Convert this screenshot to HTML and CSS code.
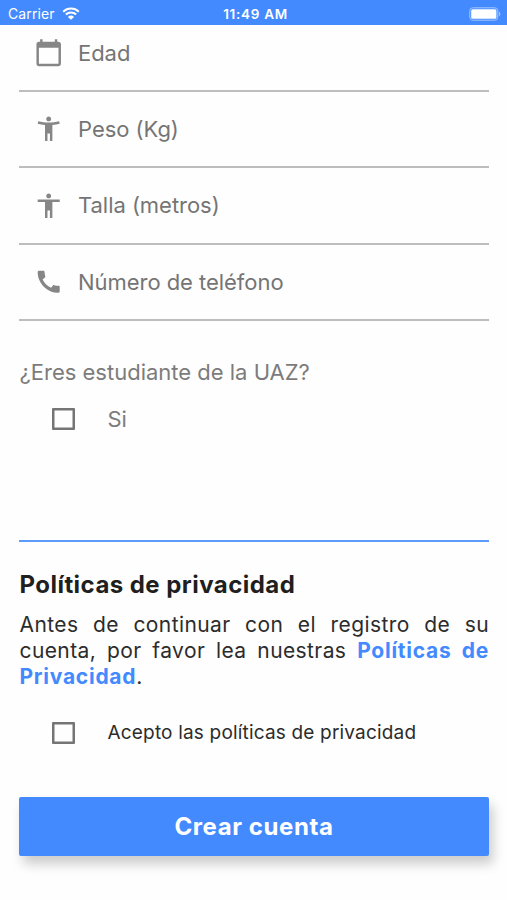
FILE: index.html
```html
<!DOCTYPE html>
<html lang="es">
<head>
  <meta charset="UTF-8" />
  <meta name="viewport" content="width=device-width, initial-scale=1.0" />
  <title>Registro</title>
  <link rel="stylesheet" href="styles.css">
</head>
<body>

  <!-- Barra de estado -->
  <header class="status-bar">
    <div class="status-left">
      <span class="carrier">Carrier</span>
      <svg class="wifi" viewBox="0 0 18 13" aria-hidden="true">
        <path d="M1.2 4.7a11.2 11.2 0 0 1 15.6 0M3.9 7.6a7.3 7.3 0 0 1 10.2 0" />
        <path class="wifi-dot" d="M9 12.8L5.9 9.9a4.4 4.4 0 0 1 6.2 0z" />
      </svg>
    </div>
    <span class="clock">11:49 AM</span>
    <div class="status-right">
      <svg class="battery" viewBox="0 0 32 14" aria-hidden="true">
        <rect class="battery-frame" x="0.8" y="0.8" width="28" height="12.4" rx="3" />
        <rect x="2.2" y="2.2" width="25.2" height="9.6" rx="1.6" />
        <path class="battery-tip" d="M30 4.8c1.8.6 1.8 3.8 0 4.4z" />
      </svg>
    </div>
  </header>

  <main class="form">
    <!-- Campos -->
    <div class="fields">
      <div class="field">
        <svg class="icon" viewBox="0 0 24 24"><path d="M20 3h-1V1h-2v2H7V1H5v2H4c-1.1 0-2 .9-2 2v16c0 1.1.9 2 2 2h16c1.1 0 2-.9 2-2V5c0-1.1-.9-2-2-2zm0 18H4V8h16v13z"/></svg>
        <span>Edad</span>
      </div>
      <div class="field">
        <svg class="icon" viewBox="0 0 24 24"><path d="M20.5 6c-2.61.7-5.67 1-8.5 1s-5.89-.3-8.5-1L3 8c1.86.5 4 .83 6 1v13h2v-6h2v6h2V9c2-.17 4.14-.5 6-1l-.5-2zM12 6c1.1 0 2-.9 2-2s-.9-2-2-2-2 .9-2 2 .9 2 2 2z"/></svg>
        <span>Peso (Kg)</span>
      </div>
      <div class="field">
        <svg class="icon" viewBox="0 0 24 24"><path d="M12 2c1.1 0 2 .9 2 2s-.9 2-2 2-2-.9-2-2 .9-2 2-2zm9 7h-6v13h-2v-6h-2v6H9V9H3V7h18v2z"/></svg>
        <span>Talla (metros)</span>
      </div>
      <div class="field">
        <svg class="icon" viewBox="0 0 24 24"><path d="M20.01 15.38c-1.23 0-2.42-.2-3.53-.56-.35-.12-.74-.03-1.01.24l-1.57 1.97c-2.83-1.35-5.48-3.9-6.89-6.83l1.95-1.66c.27-.28.35-.67.24-1.02-.37-1.11-.56-2.3-.56-3.53 0-.54-.45-.99-.99-.99H4.19C3.65 3 3 3.24 3 3.99 3 13.28 10.73 21 20.01 21c.71 0 .99-.63.99-1.18v-3.45c0-.54-.45-.99-.99-.99z"/></svg>
        <span>Número de teléfono</span>
      </div>
    </div>

    <!-- Estudiante -->
    <section class="student">
      <p class="question">¿Eres estudiante de la UAZ?</p>
      <div class="check-row">
        <span class="checkbox" role="checkbox" aria-checked="false" tabindex="0"></span>
        <span class="check-label">Si</span>
      </div>
    </section>

    <!-- Privacidad -->
    <section class="privacy">
      <h2>Políticas de privacidad</h2>
      <p class="privacy-text">Antes de continuar con el registro de su cuenta, por favor lea nuestras <a class="link">Políticas de Privacidad</a>.</p>
      <div class="check-row">
        <span class="checkbox" role="checkbox" aria-checked="false" tabindex="0"></span>
        <span class="check-label accept">Acepto las políticas de privacidad</span>
      </div>
    </section>

    <button class="submit">Crear cuenta</button>
  </main>

</body>
</html>
```
FILE: styles.css
```css
* {
  box-sizing: border-box;
}

body {
  margin: 0;
  height: 900px;
  overflow: hidden;
  background: #fefefe;
  font-family: Inter, "Liberation Sans", sans-serif;
  color: #2c2c2c;
}

.status-bar {
  display: grid;
  grid-template-columns: 1fr auto 1fr;
  align-items: center;
  height: 25px;
  padding: 2px 6px 0 8px;
  background: #448aff;
  color: #fff;
  font-size: 14px;
  position: relative;
  z-index: 1;
}

.status-left {
  display: flex;
  align-items: center;
  gap: 7px;
}

.status-right {
  display: flex;
  justify-content: flex-end;
}

.carrier {
  letter-spacing: 0.1px;
}

.clock {
  padding-left: 2px;
  font-size: 13.5px;
  font-weight: 600;
  letter-spacing: 0.7px;
}

.wifi {
  width: 18px;
  height: 13px;
  fill: none;
  stroke: #fff;
  stroke-width: 2.1;
}

.wifi-dot {
  fill: #fff;
  stroke: none;
}

.battery {
  width: 32px;
  height: 14px;
  fill: #fff;
}

.battery-frame {
  fill: none;
  stroke: #a3c6ff;
  stroke-width: 1;
}

.battery-tip {
  fill: #a3c6ff;
}

.form {
  padding: 0 18px 0 19px;
}

/* La lista queda desplazada bajo la barra de estado */
.fields {
  margin-top: -9.5px;
}

.field {
  display: flex;
  align-items: center;
  gap: 15px;
  height: 76.35px;
  padding-left: 14.6px;
  border-bottom: 2px solid #bdbdbd;
  font-size: 22px;
  letter-spacing: -0.04px;
  color: #757575;
}

.icon {
  width: 29.4px;
  height: 29.4px;
  flex: none;
  fill: #868686;
}

.student {
  height: 221px;
  padding: 37px 0 0 0.5px;
  border-bottom: 2px solid #5e9bff;
  color: #7c7c7c;
  font-size: 22px;
}

.question {
  margin: 0 0 13px;
  line-height: 28px;
}

.check-row {
  display: flex;
  align-items: center;
  gap: 33px;
  height: 40px;
  padding-left: 32.5px;
}

.checkbox {
  width: 22.5px;
  height: 22.5px;
  border: 2px solid #757575;
  border-radius: 1px;
  box-shadow: inset 0 0 0 0.5px #757575;
}

.privacy {
  padding-left: 0.5px;
}

.privacy h2 {
  margin: 28px 0 0;
  font-size: 24px;
  font-weight: 650;
  line-height: 30px;
  letter-spacing: 0.45px;
  color: #1f1f1f;
}

.privacy-text {
  margin: 12.6px 0 23.4px;
  font-size: 21px;
  line-height: 25.7px;
  letter-spacing: 0.4px;
  text-align: justify;
}

.link {
  color: #448aff;
  font-weight: 700;
  letter-spacing: 0.75px;
}

.accept {
  font-size: 19px;
  letter-spacing: 0.18px;
}

.submit {
  display: block;
  width: 100%;
  height: 59px;
  margin-top: 44px;
  border: none;
  border-radius: 2px;
  background: #448aff;
  box-shadow: 4px 8px 12px rgba(0, 0, 0, 0.2);
  color: #fff;
  font-family: inherit;
  font-size: 24px;
  font-weight: 700;
  letter-spacing: 0.6px;
}
```
